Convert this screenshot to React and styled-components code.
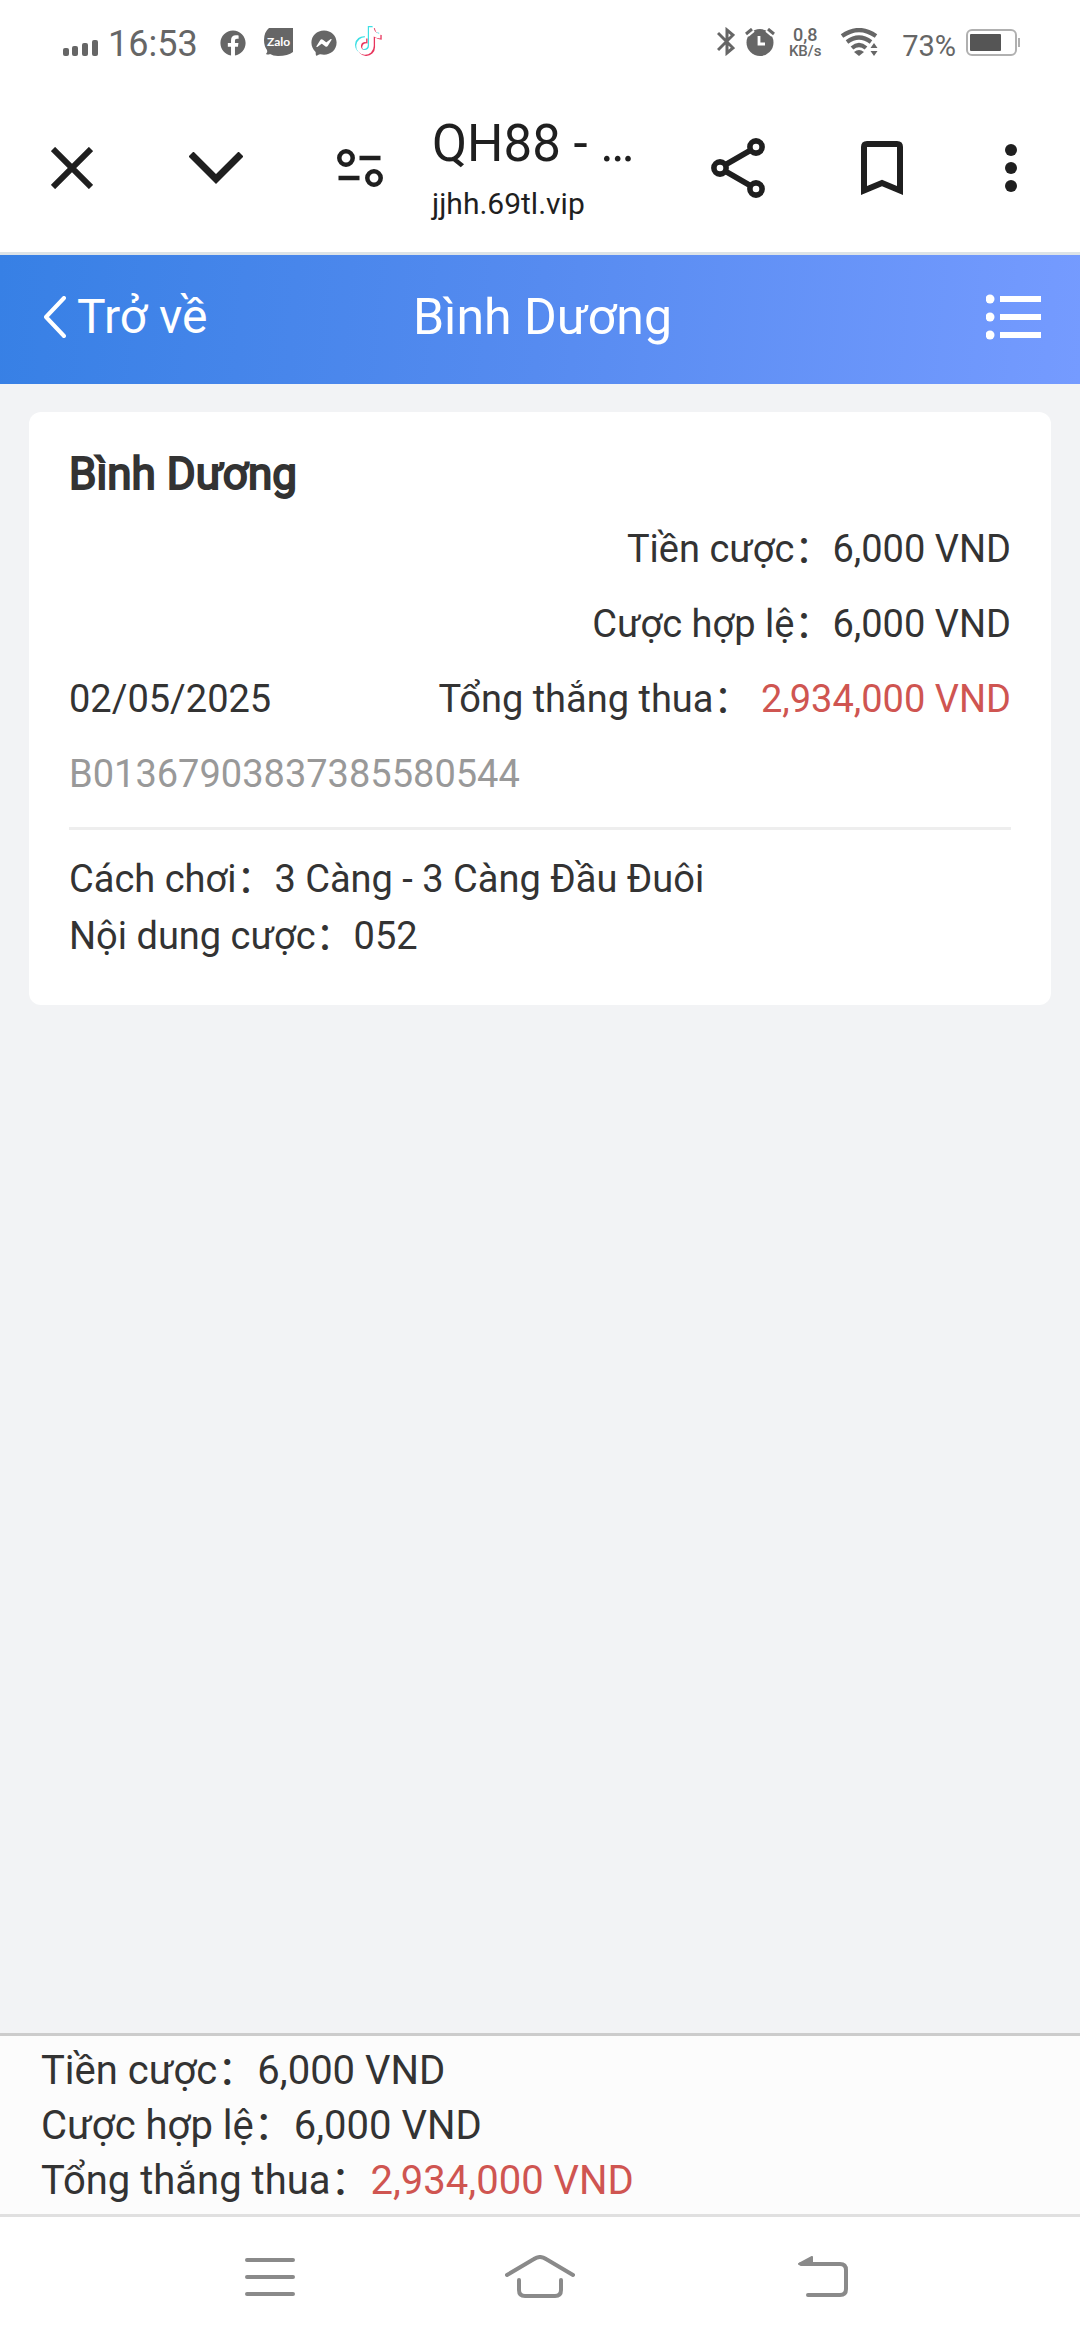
import React from "react";
import styled, { createGlobalStyle } from "styled-components";
import { FaFacebook, FaFacebookMessenger } from "react-icons/fa";

const GlobalStyle = createGlobalStyle`
  *, *::before, *::after { box-sizing: border-box; }
  body {
    margin: 0;
    background: #f2f3f5;
    color: #333;
    font-family: Roboto, "Noto Sans CJK SC", sans-serif;
  }
  svg { display: block; flex: none; }
`;

const Screen = styled.div`
  display: flex;
  flex-direction: column;
  min-height: 100vh;
`;

/* ---------- status bar ---------- */

const StatusBar = styled.div`
  display: flex;
  align-items: last baseline;
  justify-content: space-between;
  height: 84px;
  padding: 0 60px 17px 62px;
  background: #fff;
  color: #666;
`;

const StatusGroup = styled.div`
  display: flex;
  align-items: last baseline;
  gap: ${({ $gap }) => $gap}px;
`;

const StatusText = styled.span`
  font-size: ${({ $size }) => $size}px;
  line-height: 42px;
`;

const Speed = styled.div`
  display: flex;
  flex-direction: column;
  align-items: center;
  width: 40px;
  font-size: 15px;
  font-weight: 500;
  line-height: 16px;
`;

const SpeedValue = styled.span`
  font-size: 18px;
`;

/* ---------- browser toolbar ---------- */

const Toolbar = styled.header`
  display: flex;
  align-items: center;
  height: 171px;
  padding-right: 12px;
  border-bottom: 3px solid #dde3e7;
  background: #fff;
  color: #1f1f1f;
`;

const IconButton = styled.button`
  display: flex;
  flex: none;
  align-items: center;
  justify-content: center;
  width: ${({ $width }) => $width || 144}px;
  height: 144px;
  padding: 0;
  border: 0;
  background: none;
  color: inherit;
`;

const PageInfo = styled.div`
  flex: 1;
  min-width: 0;
  white-space: nowrap;
`;

const PageTitle = styled.div`
  font-size: 51px;
  line-height: 72px;
`;

const PageAddress = styled.div`
  font-size: 30px;
  line-height: 48px;
`;

/* ---------- site header ---------- */

const SiteHeader = styled.div`
  display: grid;
  grid-template-columns: 1fr auto 1fr;
  align-items: center;
  height: 129px;
  padding: 0 39px 6px 44px;
  background: linear-gradient(95deg, #3780e5, #568bf0 50%, #759bff);
  color: #fff;
`;

const BackLink = styled.a`
  display: flex;
  align-items: center;
  gap: 11px;
  color: inherit;
  font-size: 48px;
  line-height: 60px;
  text-decoration: none;
`;

const SiteTitle = styled.h1`
  margin: 0;
  font-size: 50px;
  font-weight: 400;
  line-height: 60px;
`;

const MenuButton = styled.button`
  justify-self: end;
  padding: 0;
  border: 0;
  background: none;
  color: inherit;
`;

/* ---------- bet card ---------- */

const Main = styled.main`
  flex: 1;
  padding: 28px 29px;
`;

const Card = styled.article`
  padding: 32px 40px 40px;
  border-radius: 12px;
  background: #fff;
  font-size: 38px;
`;

const CardTitle = styled.h2`
  margin: 0 0 8px;
  font-size: 44px;
  font-weight: 400;
  line-height: 60px;
  -webkit-text-stroke: 2px currentColor;
`;

const AmountRow = styled.div`
  display: flex;
  justify-content: flex-end;
  line-height: 75px;
`;

const DateText = styled.time`
  margin-right: auto;
`;

const OrderNumber = styled.div`
  color: #999;
  line-height: 75px;
`;

const Details = styled.div`
  margin-top: 15px;
  padding-top: 21px;
  border-top: 3px solid #eee;
  line-height: 57px;
`;

const Loss = styled.span`
  color: #cf5551;
`;

/* ---------- totals and system navigation ---------- */

const Totals = styled.footer`
  padding: 7px 41px 6px;
  border-top: 3px solid #ccc;
  background: #fcfcfc;
  font-size: 40px;
  line-height: 55px;
`;

const SystemNav = styled.nav`
  display: flex;
  align-items: center;
  justify-content: center;
  height: 126px;
  padding-bottom: 3px;
  border-top: 3px solid #e0e0e0;
  background: #fff;
  color: #8a8a8a;
`;

const NavButton = styled(IconButton)`
  width: 25%;
  height: 120px;
`;

/* ---------- drawings ---------- */

const SignalIcon = () => (
  <svg width="36" height="16" viewBox="0 0 36 16" fill="currentColor">
    <rect x="1" y="8" width="6" height="8" rx="2" />
    <rect x="10" y="6" width="6" height="10" rx="2" />
    <rect x="20" y="3" width="6" height="13" rx="2" />
    <rect x="30" y="0" width="6" height="16" rx="2" />
  </svg>
);

const ZaloIcon = () => (
  <svg width="29" height="28" viewBox="0 0 29 28">
    <path d="M5 0H29V24Q24 28 14 28Q9 28 6 26Q4 27 2 26Q4 24 3 22Q0 18 0 12Q0 4 5 0Z" fill="currentColor" />
    <text x="14.5" y="18" textAnchor="middle" fontFamily="Lato, sans-serif" fontWeight="700" fontSize="12" fill="#fff">
      Zalo
    </text>
  </svg>
);

const NOTE =
  "M448,209.91a210.06,210.06,0,0,1-122.77-39.25V349.38A162.55,162.55,0,1,1,185,188.31V278.2a74.62,74.62,0,1,0,52.23,71.18V0l88,0a121.18,121.18,0,0,0,1.86,22.17h0A122.18,122.18,0,0,0,381,102.39a121.43,121.43,0,0,0,67,20.14Z";

const TikTokIcon = () => (
  <svg width="27" height="30" viewBox="-22 -22 500 556">
    <path d={NOTE} fill="#3fdfe4" transform="translate(-22 -20)" />
    <path d={NOTE} fill="#e8345c" transform="translate(24 22)" />
    <path d={NOTE} fill="#fff" />
  </svg>
);

const BluetoothIcon = () => (
  <svg width="18" height="29" viewBox="0 0 18 29" fill="none" stroke="currentColor" strokeWidth="3">
    <path d="M1 6 16 21 10 26V3L16 8 1 23" />
  </svg>
);

const AlarmIcon = () => (
  <svg width="30" height="28" viewBox="0 0 30 28" fill="none" stroke="currentColor" strokeWidth="3">
    <circle cx="15" cy="14.500" r="13.500" fill="currentColor" stroke="none" />
    <path d="M3 8 9 3M21 3 27 8" stroke="#fff" strokeWidth="2" />
    <path d="M1 6 7 1M23 1 29 6" />
    <path d="M14 8V16H20" stroke="#fff" strokeWidth="2.800" />
  </svg>
);

const WifiIcon = () => (
  <svg width="57" height="28" viewBox="0 0 57 28" fill="none" stroke="currentColor" strokeWidth="4.200">
    <path d="M7 8Q24 -4 41 8" />
    <path d="M12 14Q24 5 36 14" />
    <path d="M17 20Q24 14 31 20" />
    <path d="M24 28 19 24Q24 20 29 24Z" fill="currentColor" stroke="none" />
    <path d="M39 15 42.500 20H35.500ZM35.500 23H42.500L39 28Z" fill="currentColor" stroke="none" />
  </svg>
);

const BatteryIcon = () => (
  <svg width="54" height="27" viewBox="0 0 54 27">
    <rect x="1" y="1" width="49" height="25" rx="5" fill="none" stroke="#b0b0b0" strokeWidth="2" />
    <rect x="4" y="5" width="31" height="17" rx="1" fill="#555" />
    <path d="M52 9h2v9h-2z" fill="#b0b0b0" />
  </svg>
);

const CloseIcon = () => (
  <svg width="42" height="42" viewBox="0 0 42 42" stroke="currentColor" strokeWidth="6">
    <path d="M2 2 40 40M40 2 2 40" />
  </svg>
);

const ChevronDownIcon = () => (
  <svg width="54" height="32" viewBox="0 0 54 32" fill="none" stroke="currentColor" strokeWidth="7">
    <path d="M2 2 27 27 52 2" />
  </svg>
);

const TuneIcon = () => (
  <svg width="46" height="38" viewBox="0 0 46 38" fill="none" stroke="currentColor" strokeWidth="4.500">
    <circle cx="9" cy="9" r="6.700" />
    <circle cx="37" cy="29" r="6.700" />
    <path d="M22.500 9H43.500M1.500 29H22.500" />
  </svg>
);

const ShareIcon = () => (
  <svg width="54" height="60" viewBox="0 0 54 60" fill="none" stroke="currentColor" strokeWidth="5.600">
    <path d="M14 27 40 12M14 33 40 48" />
    <circle cx="9" cy="30" r="6.100" />
    <circle cx="45" cy="9" r="6.100" />
    <circle cx="45" cy="51" r="6.100" />
  </svg>
);

const BookmarkIcon = () => (
  <svg width="42" height="54" viewBox="0 0 42 54" fill="none" stroke="currentColor" strokeWidth="6">
    <path d="M3 49.500V6Q3 3 6 3H36Q39 3 39 6V49.500L21 42Z" />
  </svg>
);

const MoreIcon = () => (
  <svg width="12" height="48" viewBox="0 0 12 48" fill="currentColor">
    <circle cx="6" cy="6" r="6" />
    <circle cx="6" cy="24" r="6" />
    <circle cx="6" cy="42" r="6" />
  </svg>
);

const BackChevron = () => (
  <svg width="22" height="42" viewBox="0 0 22 42" fill="none" stroke="currentColor" strokeWidth="4" strokeLinecap="round" strokeLinejoin="round">
    <path d="M20 2 2 21 20 40" />
  </svg>
);

const ListIcon = () => (
  <svg width="55" height="46" viewBox="0 0 55 46" fill="currentColor">
    <circle cx="4" cy="5" r="4.500" />
    <circle cx="4" cy="23" r="4.500" />
    <circle cx="4" cy="41" r="4.500" />
    <path d="M14 2H55V8H14ZM14 20H55V26H14ZM14 38H55V44H14Z" />
  </svg>
);

const navStroke = { fill: "none", stroke: "currentColor", strokeWidth: 4, strokeLinecap: "round" };

const RecentsIcon = () => (
  <svg width="50" height="38" viewBox="0 0 50 38" {...navStroke}>
    <path d="M2 2H48M2 19H48M2 36H48" />
  </svg>
);

const HomeIcon = () => (
  <svg width="70" height="44" viewBox="0 0 70 44" {...navStroke}>
    <path d="M2 20 29 4Q35 0 41 4L68 20" />
    <path d="M14 25V35Q14 41 20 41H50Q56 41 56 35V25" />
  </svg>
);

const ReturnIcon = () => (
  <svg width="78" height="42" viewBox="0 0 78 42" {...navStroke}>
    <path d="M30 8H69Q75 8 75 14V33Q75 39 69 39H37" />
    <path d="M28 8 41 1V8Z" strokeWidth="2" fill="currentColor" strokeLinejoin="round" />
  </svg>
);

export default function App() {
  return (
    <Screen>
      <GlobalStyle />
      <StatusBar>
        <StatusGroup $gap={22}>
          <StatusGroup $gap={10}>
            <SignalIcon />
            <StatusText $size={36}>16:53</StatusText>
          </StatusGroup>
          <StatusGroup $gap={18}>
            <FaFacebook size={26} />
            <ZaloIcon />
            <FaFacebookMessenger size={26} />
            <TikTokIcon />
          </StatusGroup>
        </StatusGroup>
        <StatusGroup $gap={10}>
          <BluetoothIcon />
          <AlarmIcon />
          <Speed>
            <SpeedValue>0,8</SpeedValue>
            <span>KB/s</span>
          </Speed>
          <WifiIcon />
          <StatusText $size={29}>73%</StatusText>
          <BatteryIcon />
        </StatusGroup>
      </StatusBar>

      <Toolbar>
        <IconButton aria-label="Đóng"><CloseIcon /></IconButton>
        <IconButton aria-label="Thu nhỏ"><ChevronDownIcon /></IconButton>
        <IconButton aria-label="Thông tin trang"><TuneIcon /></IconButton>
        <PageInfo>
          <PageTitle>QH88 - …</PageTitle>
          <PageAddress>jjhh.69tl.vip</PageAddress>
        </PageInfo>
        <IconButton aria-label="Chia sẻ"><ShareIcon /></IconButton>
        <IconButton aria-label="Dấu trang"><BookmarkIcon /></IconButton>
        <IconButton aria-label="Thêm" $width={114}><MoreIcon /></IconButton>
      </Toolbar>

      <SiteHeader>
        <BackLink href="#">
          <BackChevron />
          Trở về
        </BackLink>
        <SiteTitle>Bình Dương</SiteTitle>
        <MenuButton aria-label="Danh mục"><ListIcon /></MenuButton>
      </SiteHeader>

      <Main>
        <Card>
          <CardTitle>Bình Dương</CardTitle>
          <AmountRow>Tiền cược：6,000 VND</AmountRow>
          <AmountRow>Cược hợp lệ：6,000 VND</AmountRow>
          <AmountRow>
            <DateText dateTime="2025-05-02">02/05/2025</DateText>
            <span>Tổng thắng thua： <Loss>2,934,000 VND</Loss></span>
          </AmountRow>
          <OrderNumber>B01367903837385580544</OrderNumber>
          <Details>
            <div>Cách chơi：3 Càng - 3 Càng Đầu Đuôi</div>
            <div>Nội dung cược：052</div>
          </Details>
        </Card>
      </Main>

      <Totals>
        <div>Tiền cược：6,000 VND</div>
        <div>Cược hợp lệ：6,000 VND</div>
        <div>Tổng thắng thua：<Loss>2,934,000 VND</Loss></div>
      </Totals>

      <SystemNav>
        <NavButton aria-label="Gần đây"><RecentsIcon /></NavButton>
        <NavButton aria-label="Trang chủ"><HomeIcon /></NavButton>
        <NavButton aria-label="Quay lại"><ReturnIcon /></NavButton>
      </SystemNav>
    </Screen>
  );
}
